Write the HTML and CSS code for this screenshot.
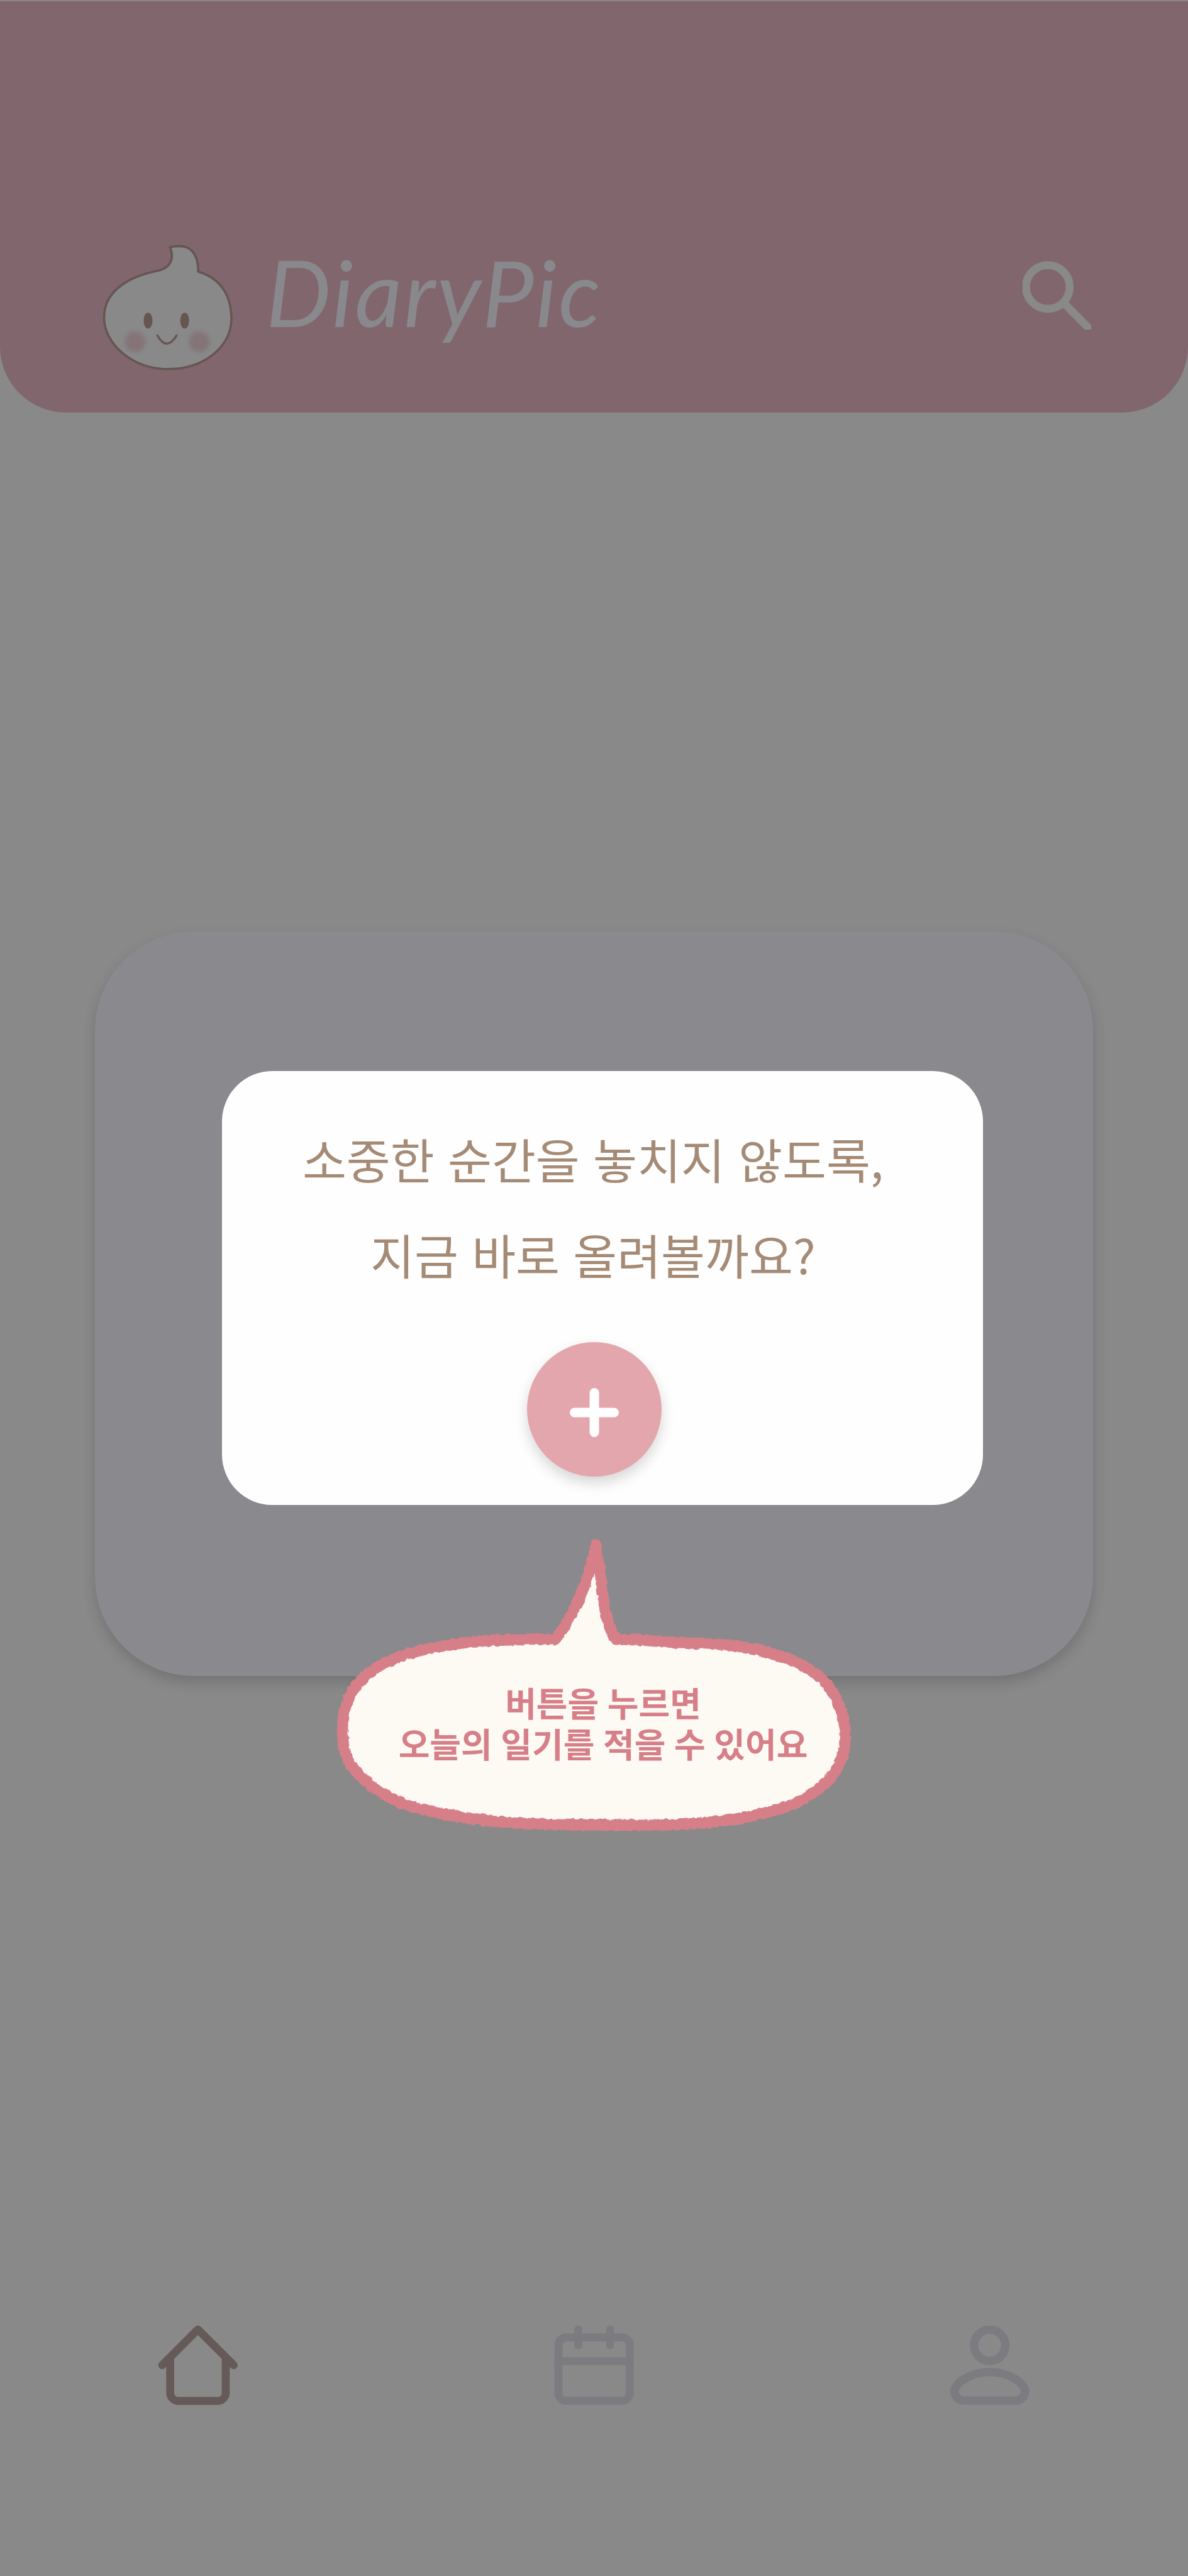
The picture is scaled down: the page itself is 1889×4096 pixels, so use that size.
FILE: index.html
```html
<!DOCTYPE html>
<html lang="ko">
<head>
<meta charset="utf-8">
<title>DiaryPic</title>
<link rel="stylesheet" href="styles.css">
</head>
<body>
<div class="screen">
  <header class="header">
    <svg class="mascot" viewBox="110 90 940 900" aria-hidden="true">
      <defs><filter id="soft" x="-50%" y="-50%" width="200%" height="200%"><feGaussianBlur stdDeviation="17"/></filter></defs>
      <path class="mascot-body" d="M597 115C640 108 690 108 715 118C770 140 797 210 794 287C900 318 965 385 998 460C1022 515 1027 560 1028 615C1028 820 830 972 583 972C325 972 134 790 134 610C134 440 280 330 500 284C600 268 630 200 597 115Z"/>
      <circle class="cheek" cx="352" cy="780" r="72" filter="url(#soft)"/>
      <circle class="cheek" cx="802" cy="780" r="72" filter="url(#soft)"/>
      <ellipse class="eye" cx="443" cy="632" rx="31" ry="56"/>
      <ellipse class="eye" cx="700" cy="632" rx="31" ry="56"/>
      <path class="smile" d="M508 736Q575 850 643 736"/>
    </svg>
    <h1 class="wordmark">DiaryPic</h1>
    <svg class="search" viewBox="2395.5 612 161 161" aria-label="검색">
      <circle cx="2454.8" cy="673" r="51.3"/>
      <path d="M2496 714L2562 781"/>
    </svg>
  </header>

  <main class="main">
    <section class="card">
      <div class="panel">
        <p class="prompt">소중한 순간을 놓치지 않도록,<br>지금 바로 올려볼까요?</p>
        <button class="add" aria-label="추가">
          <svg viewBox="0 0 78 78"><path d="M39 7.500V70.500M7.500 39H70.500"/></svg>
        </button>
      </div>
      <div class="bubble">
        <svg class="bubble-shape" viewBox="0 0 1260 740" aria-hidden="true">
          <defs><filter id="rough" x="-5%" y="-5%" width="110%" height="110%"><feTurbulence type="fractalNoise" baseFrequency="0.09" numOctaves="2" seed="4"/><feDisplacementMap in="SourceGraphic" scale="9" xChannelSelector="R" yChannelSelector="G"/></filter></defs>
          <path filter="url(#rough)" d="M636 41C620 120 590 200 540 262C510 261 480 261 450 263C400 264 360 266 321 271C270 278 230 285 193 297C160 308 130 320 108 338C80 362 68 375 60 394C48 420 42 440 42 470C42 495 43 508 48 528C56 550 68 568 88 585C110 607 135 625 161 637C195 655 240 664 281 672C340 684 395 689 450 692C515 696 580 697 643 697C715 698 785 698 844 695C905 691 960 686 1005 675C1050 664 1090 655 1117 640C1140 627 1160 613 1173 599C1190 584 1200 570 1207 552C1217 530 1220 515 1220 491C1220 465 1217 445 1209 425C1202 403 1195 388 1181 373C1168 355 1148 338 1125 326C1100 311 1075 303 1045 295C1020 286 995 281 964 278C930 273 900 272 868 271C835 270 800 268 771 266C740 263 710 263 683 262C668 240 660 215 655 175C650 145 648 115 636 41Z"/>
        </svg>
        <p class="bubble-text">버튼을 누르면<br>오늘의 일기를 적을 수 있어요</p>
      </div>
    </section>
  </main>

  <nav class="nav">
    <a class="tab tab-active" aria-label="홈"><svg class="icon" viewBox="0 0 24 24"><path d="M3 12L12 3L21 12M5 10.500V19A2 2 0 0 0 7 21H17A2 2 0 0 0 19 19V10.500"/></svg></a>
    <a class="tab" aria-label="달력"><svg class="icon" viewBox="0 0 24 24"><rect x="3" y="5" width="18" height="16" rx="2"/><path d="M3 11H21M8 3V7M16 3V7"/></svg></a>
    <a class="tab" aria-label="프로필"><svg class="icon icon-person" viewBox="0 0 24 24"><circle cx="12" cy="7" r="3.930"/><path d="M12 13.720C6.600 13.720 3.070 17 3.070 18.480C3.070 19.850 4.200 20.930 5.500 20.930H18.500C19.800 20.930 20.930 19.850 20.930 18.480C20.930 17 17.400 13.720 12 13.720Z"/></svg></a>
  </nav>
</div>
</body>
</html>
```
FILE: styles.css
```css
* { box-sizing: border-box; }

body {
  margin: 0;
  background: #89898a;
  font-family: "Noto Sans CJK KR", sans-serif;
}

.screen {
  display: flex;
  flex-direction: column;
  width: 1889px;
  height: 4096px;
  padding-top: 2px;
  overflow: hidden;
}

.header {
  display: flex;
  align-items: flex-start;
  height: 654px;
  padding: 0 154px 0 160px;
  border-radius: 0 0 105px 105px;
  background: #81676d;
}

.mascot {
  flex: none;
  width: 213px;
  height: 204px;
  margin-top: 385px;
}
.mascot-body { fill: #89898a; stroke: #665552; stroke-width: 16; stroke-linejoin: round; }
.cheek { fill: #81676d; opacity: .62; }
.eye { fill: #665552; }
.smile { fill: none; stroke: #665552; stroke-width: 15; stroke-linecap: round; }

.wordmark {
  margin: 372px 0 0 50px;
  color: #89898d;
  font: italic 400 146px/180px Lato, sans-serif;
  letter-spacing: 3px;
  white-space: nowrap;
}

.search {
  flex: none;
  width: 109px;
  height: 109px;
  margin: 413px 0 0 auto;
  fill: none;
  stroke: #89898a;
  stroke-width: 18.500;
}

.main { flex: 1; padding: 825px 151px 0; }

.card {
  position: relative;
  height: 1184px;
  padding: 222px 0 0 202px;
  border-radius: 157px;
  background: #8a898d;
  box-shadow: 0 10px 21px rgba(0, 0, 0, .16);
}

.panel {
  display: flex;
  flex-direction: column;
  align-items: center;
  width: 1210px;
  height: 690px;
  padding: 64px 27px 0 0;
  border-radius: 80px;
  background: #fefefe;
}

.prompt {
  margin: 0 3px 0 0;
  color: #a58b75;
  font-size: 76px;
  line-height: 151.500px;
  text-align: center;
  white-space: nowrap;
}

.add {
  display: flex;
  align-items: center;
  justify-content: center;
  width: 214px;
  height: 214px;
  margin-top: 64px;
  padding: 10px 0 0;
  border: 0;
  border-radius: 50%;
  background: #e3a6ad;
  box-shadow: 0 10px 21px rgba(0, 0, 0, .16);
}
.add svg { width: 78px; height: 78px; fill: none; stroke: #fff; stroke-width: 15; stroke-linecap: round; }

/* Speech bubble pointing at the add button, over the card's lower edge */
.bubble {
  position: absolute;
  left: 365px;
  top: 948px;
  width: 855px;
  height: 502px;
  padding-top: 245px;
}
.bubble-shape { position: absolute; inset: 0; width: 100%; height: 100%; }
.bubble-shape path { fill: #fdf9f3; stroke: #d67f88; stroke-width: 26; stroke-linejoin: round; }
.bubble-text {
  position: relative;
  margin: 0;
  padding-left: 31px;
  color: #d67f88;
  font-size: 54px;
  font-weight: 700;
  line-height: 65px;
  word-spacing: -1.500px;
  text-align: center;
  white-space: nowrap;
}

.nav { display: flex; height: 411px; }
.tab { display: flex; flex: 1; justify-content: center; color: #7c7b7f; }
.tab-active { color: #665a58; }
.icon {
  width: 151.500px;
  height: 151.500px;
  fill: none;
  stroke: currentColor;
  stroke-width: 2;
  stroke-linecap: round;
  stroke-linejoin: round;
}
.icon-person { stroke-width: 2.130; }
```
